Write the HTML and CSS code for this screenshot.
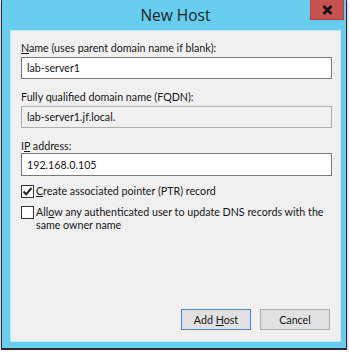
FILE: index.html
```html
<!DOCTYPE html>
<html lang="en">
<head>
    <meta charset="UTF-8">
    <meta name="viewport" content="width=device-width, initial-scale=1.0">
    <title>New Host</title>
    <link rel="stylesheet" href="styles.css">
</head>
<body>
    <div class="window">
        <div class="titlebar">
            <span class="title">New Host</span>
            <span class="close">
                <svg width="11" height="10" viewBox="0 0 11 10">
                    <path d="M1.5 1 L9.5 9 M9.5 1 L1.5 9" stroke="#111" stroke-width="2.6" fill="none"/>
                </svg>
            </span>
        </div>
        <div class="panel">
            <label class="field-label label-name"><u>N</u>ame (uses parent domain name if blank):</label>
            <input class="field" type="text" value="lab-server1">

            <label class="field-label label-fqdn">Fully qualified domain name (FQDN):</label>
            <input class="field readonly" type="text" value="lab-server1.jf.local." readonly>

            <label class="field-label label-ip">I<u>P</u> address:</label>
            <input class="field field-ip" type="text" value="192.168.0.105">

            <div class="check-row first">
                <span class="box">
                    <svg width="11" height="11" viewBox="0 0 11 11">
                        <path d="M1.5 5.5 L4.2 8.3 L9.5 2" stroke="#222" stroke-width="2" fill="none"/>
                    </svg>
                </span>
                <span class="check-text"><u>C</u>reate associated pointer (PTR) record</span>
            </div>
            <div class="check-row">
                <span class="box"></span>
                <span class="check-text">All<u>o</u>w any authenticated user to update DNS records with the<br>same owner name</span>
            </div>

            <div class="buttons">
                <button class="btn default">Add <u>H</u>ost</button>
                <button class="btn">Cancel</button>
            </div>
        </div>
    </div>
</body>
</html>
```

FILE: styles.css
```css
* {
    box-sizing: border-box;
}
body {
    margin: 0;
    background-color: #fff;
    font-family: Lato, 'Open Sans', sans-serif;
    font-size: 10.7px;
    color: #161616;
}
.window {
    position: relative;
    margin-left: 1px;
    width: 346px;
    height: 350px;
    background-color: #66cdee;
    border: 1px solid #2c2c2c;
    border-top: none;
    border-bottom-width: 2px;
    padding: 0 5px 6px 8px;
    display: flex;
    flex-direction: column;
    box-shadow: 0 1px 3px rgba(0, 0, 0, 0.35);
}
.titlebar {
    height: 30px;
    display: flex;
    align-items: center;
    justify-content: center;
    padding-bottom: 1px;
}
.title {
    font-family: 'Open Sans', sans-serif;
    font-size: 15.5px;
    color: #1e1e1e;
}
.close {
    position: absolute;
    top: 0;
    right: 2px;
    width: 34px;
    height: 20px;
    background-color: #c75050;
    border: 1px solid #a84545;
    border-top: none;
    display: flex;
    align-items: center;
    justify-content: center;
}
.panel {
    flex: 1;
    background-color: #f0f0f0;
    border: 1px solid #c4e6f4;
    padding: 10px 8px 11px 10px;
    display: flex;
    flex-direction: column;
}
.field-label {
    display: block;
    line-height: 14px;
}
.label-fqdn,
.label-ip {
    margin-top: 11px;
}
.field {
    display: block;
    width: 100%;
    height: 22px;
    margin: 2px 0 0;
    padding: 0 0 1px 5px;
    border: 1px solid #7a7a7a;
    background-color: #fff;
    font-family: inherit;
    font-size: 10.7px;
    color: #161616;
    outline: none;
}
.field.readonly {
    background-color: #f0f0f0;
    border-color: #adadad;
}
.field-ip {
    margin-top: 0;
    height: 23px;
}
.check-row {
    display: flex;
    align-items: flex-start;
    gap: 2px;
    line-height: 13px;
    margin-top: 7px;
}
.check-row.first {
    margin-top: 8px;
}
.box {
    flex: none;
    width: 13px;
    height: 13px;
    margin-top: 1px;
    border: 1px solid #333;
    background-color: #fff;
    display: flex;
    align-items: center;
    justify-content: center;
}
.buttons {
    margin-top: auto;
    margin-right: 2px;
    display: flex;
    justify-content: flex-end;
    gap: 9px;
}
.btn {
    width: 70px;
    height: 21px;
    padding: 0;
    background-color: #e1e1e1;
    border: 1px solid #adadad;
    font-family: inherit;
    font-size: 10.7px;
    color: #161616;
}
.btn.default {
    border-color: #4a8bc9;
}
```
